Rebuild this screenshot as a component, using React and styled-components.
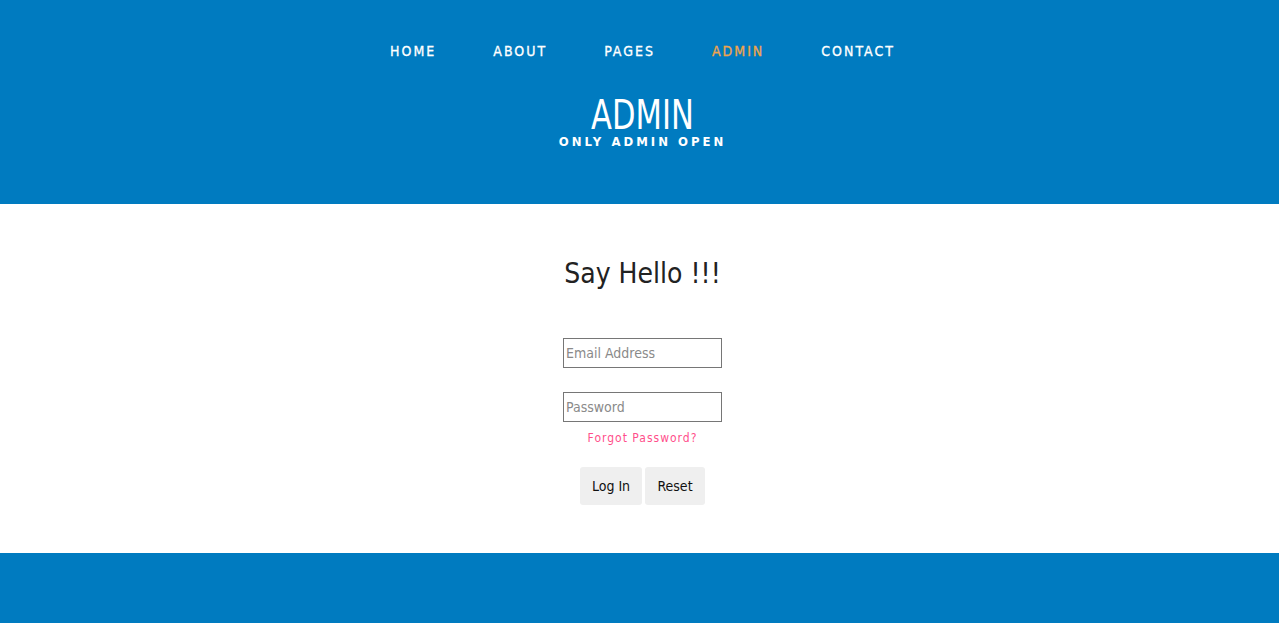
import React from 'react';
import styled, { createGlobalStyle } from 'styled-components';

const GlobalStyle = createGlobalStyle`
  html, body {
    margin: 0;
    padding: 0;
    background: #fff;
  }
  body {
    font-family: "DejaVu Sans Condensed", "Liberation Sans", sans-serif;
  }
`;

const Page = styled.div`
  display: flex;
  flex-direction: column;
  min-height: 623px;
`;

const Header = styled.header`
  background: #007bc0;
  height: 204px;
  display: flex;
  flex-direction: column;
  align-items: center;
  box-sizing: border-box;
  padding: 42px 0 0 6px;
`;

const Nav = styled.nav`
  display: flex;
  gap: 57px;
`;

const NavLink = styled.a`
  color: ${props => (props.active ? '#f0a54c' : '#ffffff')};
  font-size: 14px;
  font-weight: 400;
  letter-spacing: 2px;
  text-decoration: none;
  line-height: 18px;
  -webkit-text-stroke: 0.3px currentColor;
`;

const Title = styled.h1`
  margin: 41px 0 0;
  color: #fff;
  font-size: 34px;
  font-weight: 400;
  line-height: 28px;
  transform: scaleY(1.2);
`;

const Subtitle = styled.h2`
  margin: 6px 0 0;
  color: #fff;
  font-size: 13px;
  font-weight: 700;
  letter-spacing: 3px;
  line-height: 14px;
`;

const Main = styled.main`
  height: 349px;
  display: flex;
  flex-direction: column;
  align-items: center;
  box-sizing: border-box;
  padding: 52px 0 0 6px;
`;

const Heading = styled.h3`
  margin: 0;
  color: #222;
  font-size: 28px;
  font-weight: 400;
  line-height: 36px;
`;

const Form = styled.form`
  display: flex;
  flex-direction: column;
  align-items: center;
  margin-top: 46px;
`;

const Input = styled.input`
  width: 159px;
  height: 30px;
  box-sizing: border-box;
  border: 1px solid #767676;
  padding: 0 2px;
  font-family: inherit;
  font-size: 14px;
  color: #333;
  margin-bottom: ${props => props.gap || 0}px;
  &::placeholder {
    color: #8a8a8a;
  }
`;

const Forgot = styled.a`
  margin-top: 8px;
  color: #ff4f8b;
  font-size: 12px;
  letter-spacing: 1px;
  line-height: 16px;
  text-decoration: none;
`;

const Buttons = styled.div`
  display: flex;
  gap: 3px;
  margin-top: 21px;
`;

const Button = styled.button`
  height: 38px;
  width: ${props => props.w}px;
  border: none;
  border-radius: 3px;
  background: #efefef;
  color: #111;
  font-family: inherit;
  font-size: 14px;
  padding: 0;
`;

const Footer = styled.footer`
  background: #007bc0;
  flex: 1;
  height: 70px;
`;

const links = ['HOME', 'ABOUT', 'PAGES', 'ADMIN', 'CONTACT'];

export default function App() {
  return (
    <>
      <GlobalStyle />
      <Page>
        <Header>
          <Nav>
            {links.map(l => (
              <NavLink key={l} href="#" active={l === 'ADMIN' ? 1 : 0}>
                {l}
              </NavLink>
            ))}
          </Nav>
          <Title>ADMIN</Title>
          <Subtitle>ONLY ADMIN OPEN</Subtitle>
        </Header>
        <Main>
          <Heading>Say Hello !!!</Heading>
          <Form onSubmit={e => e.preventDefault()}>
            <Input type="email" placeholder="Email Address" gap={24} />
            <Input type="password" placeholder="Password" />
            <Forgot href="#">Forgot Password?</Forgot>
            <Buttons>
              <Button type="submit" w={62}>Log In</Button>
              <Button type="reset" w={60}>Reset</Button>
            </Buttons>
          </Form>
        </Main>
        <Footer />
      </Page>
    </>
  );
}
